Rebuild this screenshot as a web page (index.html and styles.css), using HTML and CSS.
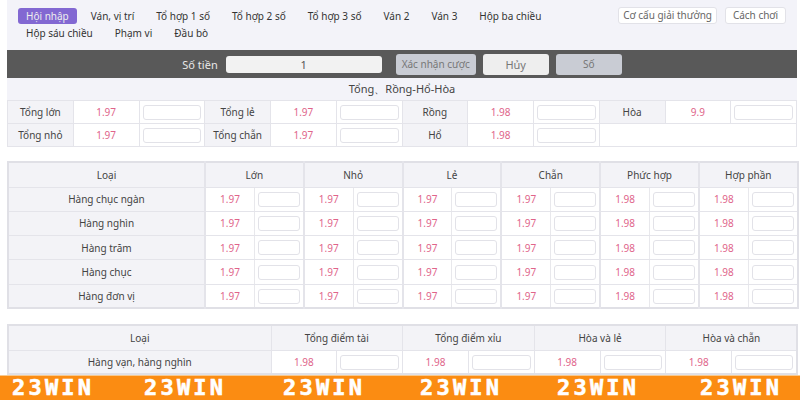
FILE: index.html
```html
<!DOCTYPE html>
<html lang="vi">
<head>
<meta charset="utf-8">
<title>Hội nhập</title>
<link rel="stylesheet" href="styles.css">
</head>
<body>
<div class="page">
  <header class="top">
    <nav class="tabs">
      <a class="tab active">Hội nhập</a><a class="tab">Ván, vị trí</a><a class="tab">Tổ hợp 1 số</a><a class="tab">Tổ hợp 2 số</a><a class="tab">Tổ hợp 3 số</a><a class="tab">Ván 2</a><a class="tab">Ván 3</a><a class="tab">Hộp ba chiều</a><a class="tab">Hộp sáu chiều</a><a class="tab">Phạm vi</a><a class="tab">Đầu bò</a>
    </nav>
    <div class="links"><a class="link">Cơ cấu giải thưởng</a><a class="link wide">Cách chơi</a></div>
  </header>
  <div class="betbar">
    <span class="betlabel">Số tiền</span>
    <div class="amount">1</div>
    <button class="btn first muted">Xác nhận cược</button>
    <button class="btn light">Hủy</button>
    <button class="btn muted">Số</button>
  </div>
  <div class="title">Tổng、Rồng-Hổ-Hòa</div>
  <table class="grid t1">
    <tr>
      <th>Tổng lớn</th><td class="odd">1.97</td><td class="in"><i></i></td>
      <th>Tổng lẻ</th><td class="odd">1.97</td><td class="in"><i></i></td>
      <th>Rồng</th><td class="odd">1.98</td><td class="in"><i></i></td>
      <th>Hòa</th><td class="odd">9.9</td><td class="in"><i></i></td>
    </tr>
    <tr>
      <th>Tổng nhỏ</th><td class="odd">1.97</td><td class="in"><i></i></td>
      <th>Tổng chẵn</th><td class="odd">1.97</td><td class="in"><i></i></td>
      <th>Hổ</th><td class="odd">1.98</td><td class="in"><i></i></td>
      <td class="blank" colspan="3"></td>
    </tr>
  </table>
  <table class="grid t2">
    <colgroup><col class="c2a"><col span="12" class="c2b"></colgroup>
    <tr class="head"><th>Loại</th><th colspan="2">Lớn</th><th colspan="2">Nhỏ</th><th colspan="2">Lẻ</th><th colspan="2">Chẵn</th><th colspan="2">Phức hợp</th><th colspan="2">Hợp phần</th></tr>
    <tr><th>Hàng chục ngàn</th><td class="odd">1.97</td><td class="in"><i></i></td><td class="odd">1.97</td><td class="in"><i></i></td><td class="odd">1.97</td><td class="in"><i></i></td><td class="odd">1.97</td><td class="in"><i></i></td><td class="odd">1.98</td><td class="in"><i></i></td><td class="odd">1.98</td><td class="in"><i></i></td></tr>
    <tr><th>Hàng nghìn</th><td class="odd">1.97</td><td class="in"><i></i></td><td class="odd">1.97</td><td class="in"><i></i></td><td class="odd">1.97</td><td class="in"><i></i></td><td class="odd">1.97</td><td class="in"><i></i></td><td class="odd">1.98</td><td class="in"><i></i></td><td class="odd">1.98</td><td class="in"><i></i></td></tr>
    <tr><th>Hàng trăm</th><td class="odd">1.97</td><td class="in"><i></i></td><td class="odd">1.97</td><td class="in"><i></i></td><td class="odd">1.97</td><td class="in"><i></i></td><td class="odd">1.97</td><td class="in"><i></i></td><td class="odd">1.98</td><td class="in"><i></i></td><td class="odd">1.98</td><td class="in"><i></i></td></tr>
    <tr><th>Hàng chục</th><td class="odd">1.97</td><td class="in"><i></i></td><td class="odd">1.97</td><td class="in"><i></i></td><td class="odd">1.97</td><td class="in"><i></i></td><td class="odd">1.97</td><td class="in"><i></i></td><td class="odd">1.98</td><td class="in"><i></i></td><td class="odd">1.98</td><td class="in"><i></i></td></tr>
    <tr><th>Hàng đơn vị</th><td class="odd">1.97</td><td class="in"><i></i></td><td class="odd">1.97</td><td class="in"><i></i></td><td class="odd">1.97</td><td class="in"><i></i></td><td class="odd">1.97</td><td class="in"><i></i></td><td class="odd">1.98</td><td class="in"><i></i></td><td class="odd">1.98</td><td class="in"><i></i></td></tr>
  </table>
  <table class="grid t3">
    <colgroup><col class="c3a"><col span="8" class="c3b"></colgroup>
    <tr class="head"><th>Loại</th><th colspan="2">Tổng điểm tài</th><th colspan="2">Tổng điểm xỉu</th><th colspan="2">Hòa và lẻ</th><th colspan="2">Hòa và chẵn</th></tr>
    <tr><th>Hàng vạn, hàng nghìn</th><td class="odd">1.98</td><td class="in"><i></i></td><td class="odd">1.98</td><td class="in"><i></i></td><td class="odd">1.98</td><td class="in"><i></i></td><td class="odd">1.98</td><td class="in"><i></i></td></tr>
  </table>
  <div class="banner"><span>23WIN</span><span>23WIN</span><span>23WIN</span><span>23WIN</span><span>23WIN</span><span>23WIN</span></div>
</div>
</body>
</html>
```
FILE: styles.css
```css
* { box-sizing: border-box; }
html, body { margin: 0; height: 400px; overflow: hidden; background: #fff; }
.page {
  position: relative;
  width: 800px;
  height: 400px;
  overflow: hidden;
  padding: 0 3px 0 7px;
  font-family: "Noto Sans", "Liberation Sans", sans-serif;
  font-size: 10px;
  color: #444;
}
.top {
  display: flex;
  justify-content: space-between;
  height: 50px;
  padding: 7px 11px 0 8px;
  background: #f3f3f9;
}
.tabs { display: flex; flex-wrap: wrap; align-content: flex-start; width: 610px; row-gap: 0; margin-top: 1px; }
.tab { height: 16px; line-height: 16px; margin: 0 3px 1px; padding: 0 8px; border-radius: 3px; color: #333; white-space: nowrap; }
.tab.active { background: #8268d2; color: #eee; }
.links { display: flex; gap: 8px; align-items: flex-start; }
.link {
  height: 17px;
  line-height: 15px;
  padding: 0 4px;
  border: 1px solid #e2e2e8;
  border-radius: 3px;
  background: #fff;
  color: #666;
  white-space: nowrap;
}
.link.wide { width: 61px; text-align: center; }
.betbar {
  display: flex;
  align-items: center;
  justify-content: center;
  height: 28px;
  background: #595959;
}
.betlabel { color: #e8e8e8; font-size: 11px; margin-right: 8px; }
.amount {
  width: 156px;
  height: 17px;
  line-height: 17px;
  border-radius: 3px;
  background: #f2f2f2;
  color: #555;
  text-align: center;
  font-size: 11px;
}
.btn {
  width: 66px;
  height: 21px;
  margin: 0 0 0 7px;
  padding: 0;
  border: 0;
  border-radius: 3px;
  font: inherit;
  color: #777;
  white-space: nowrap;
}
.btn.first { width: 80px; margin-left: 14px; }
.btn.muted { background: #c9ccd4; }
.btn.light { background: #eee; font-size: 11px; }
.title {
  height: 22px;
  line-height: 21px;
  background: #f3f3f9;
  text-align: center;
  font-size: 11px;
  color: #444;
}
.grid {
  width: 790px;
  border-collapse: collapse;
  table-layout: fixed;
  background: #fff;
  border: 1px solid #e0e0e6;
}
.grid th, .grid td { padding: 0; border: 1px solid #e4e4ea; text-align: center; font-weight: 400; }
.grid th { background: #f3f3f7; color: #444; }
.grid .blank { background: #fff; }
.odd { color: #e0648a; }
.in i { display: block; height: 15px; margin: 0 3px; background: #fff; border: 1px solid #e2e2e8; border-radius: 3px; }
.t1 tr { height: 23px; }
.t2 { margin-top: 14px; border-width: 2px; }
.t2 tr { height: 24.3px; }
.t2 tr.head, .t3 tr.head { height: 25px; }
.t2 .head th + th { border-left-width: 2px; }
.t2 .odd:nth-child(even) { border-left-width: 2px; }
.t2 .odd { border-right-color: #e8e8ec; }
.c2a { width: 197px; }
.c2b { width: 49.4px; }
.t3 { margin-top: 15px; border-width: 2px; }
.t3 tr { height: 24px; }
.c3a { width: 263px; }
.c3b { width: 65.8px; }
.banner {
  position: absolute;
  left: 0;
  right: 0;
  bottom: 0;
  height: 25px;
  display: flex;
  align-items: center;
  padding-left: 12px;
  background: #fb8c12;
  border-top: 1px solid #f7c98f;
  color: #fff;
  font-family: "DejaVu Sans Mono", monospace;
  font-weight: 700;
  font-size: 22px;
  letter-spacing: 3.2px;
  line-height: 24px;
}
.banner span { display: block; width: 82px; flex: none; margin-right: 50px; white-space: nowrap; -webkit-text-stroke: 0.6px #fff; }
.banner span:nth-child(2) { margin-right: 57px; }
.banner span:nth-child(3), .banner span:nth-child(4) { margin-right: 55px; }
.banner span:nth-child(5) { margin-right: 61px; }
```
